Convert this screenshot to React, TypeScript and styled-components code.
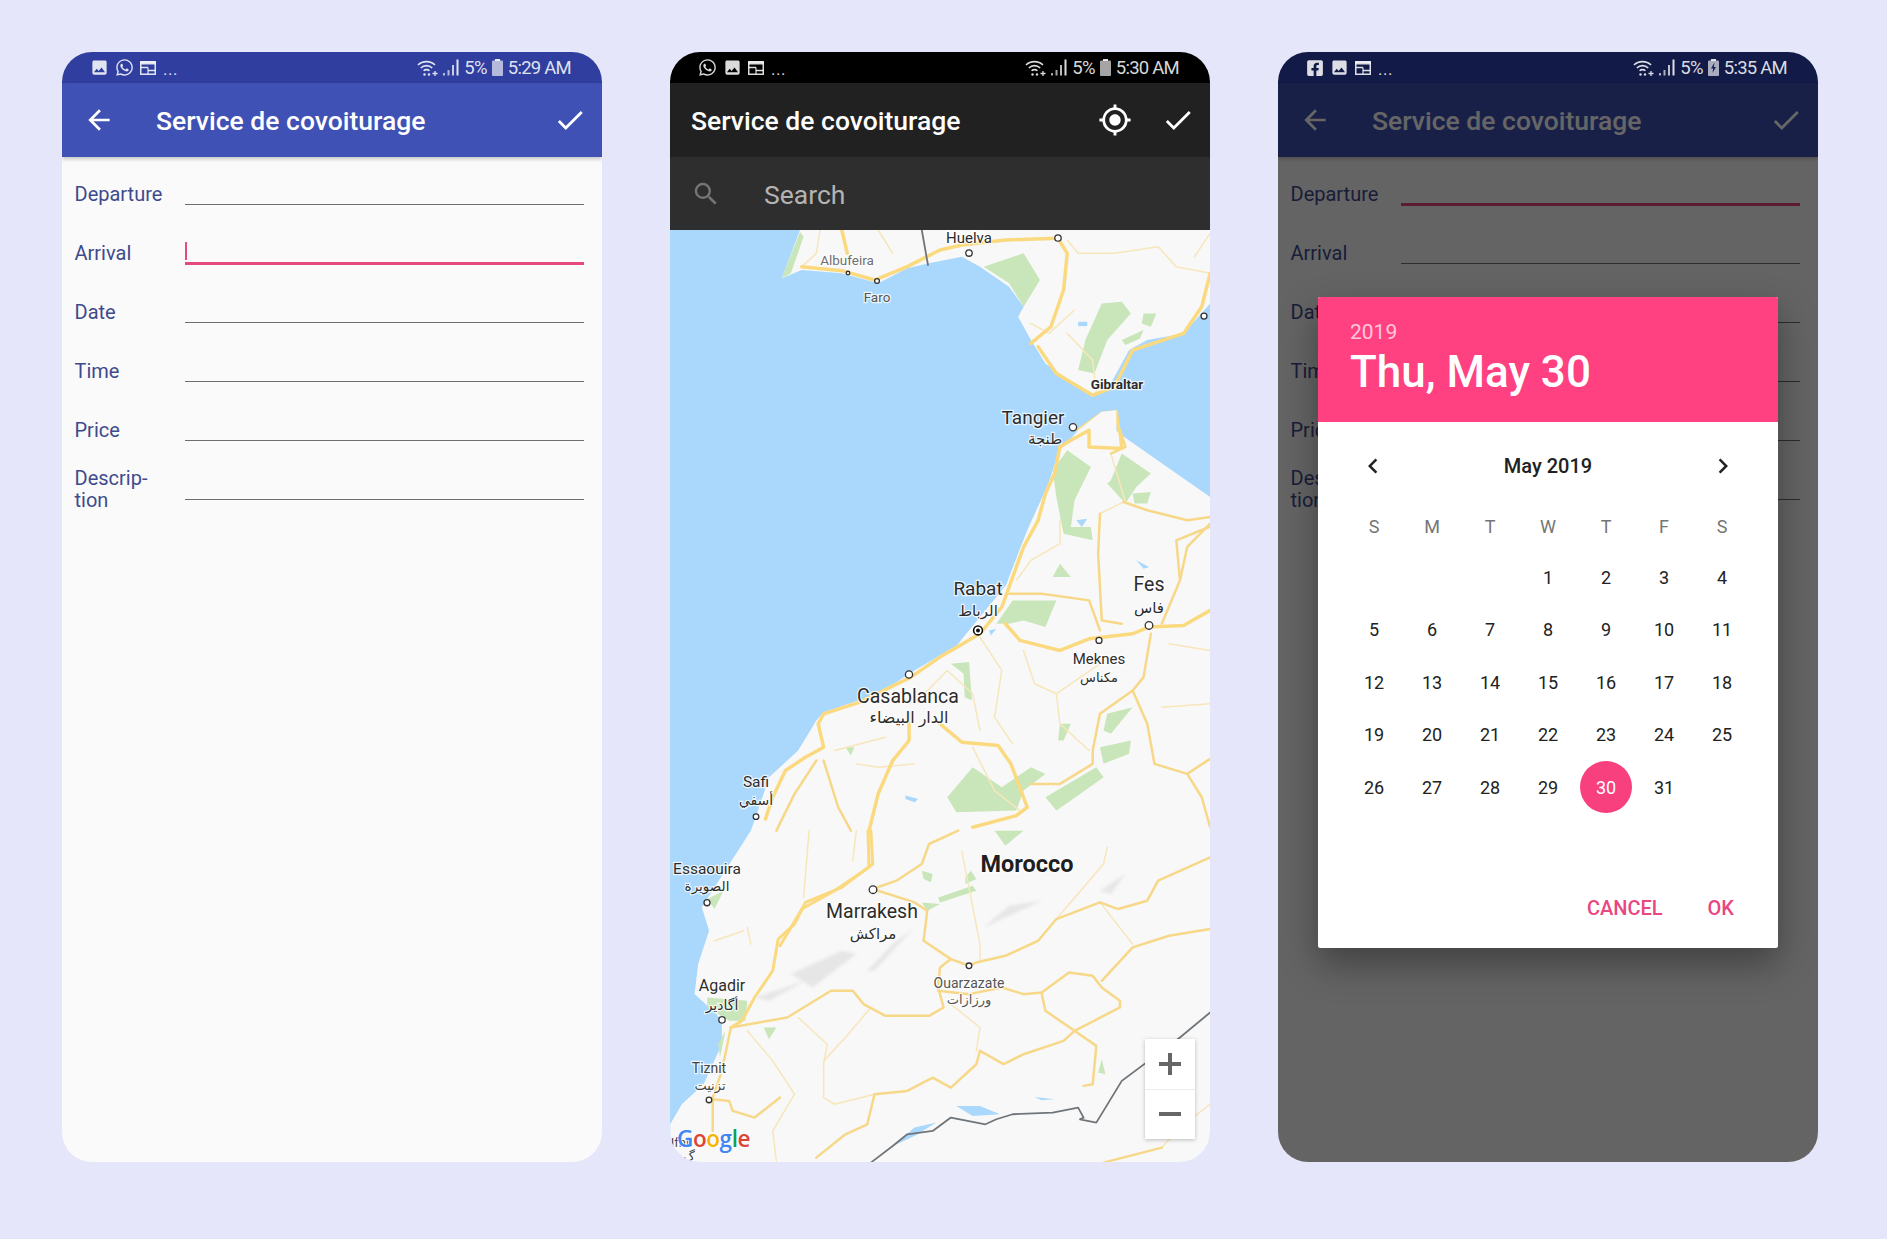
import styled, { createGlobalStyle } from "styled-components";
import { FaFacebookSquare, FaWhatsapp } from "react-icons/fa";
import {
  MdArrowBack,
  MdCheck,
  MdChevronLeft,
  MdChevronRight,
  MdGpsFixed,
  MdImage,
  MdSearch,
} from "react-icons/md";

const GlobalStyle = createGlobalStyle`
  html, body {
    margin: 0;
    background: #e5e6f9;
    font-family: Roboto, "DejaVu Sans", sans-serif;
  }
`;

const Page = styled.main`
  display: flex;
  gap: 68px;
  width: 1887px;
  height: 1239px;
  padding: 52px 0 0 62px;
  box-sizing: border-box;
  overflow: hidden;
`;

const Phone = styled.section`
  position: relative;
  display: flex;
  flex-direction: column;
  width: 540px;
  height: 1110px;
  border-radius: 30px;
  overflow: hidden;
  background: #fafafa;
`;

const StatusRow = styled.div<{ $bg: string }>`
  display: flex;
  align-items: center;
  justify-content: space-between;
  flex: none;
  height: 31px;
  padding: 0 31px 0 28px;
  background: ${(p) => p.$bg};
  color: rgba(255, 255, 255, 0.86);
  font-size: 18.5px;
  letter-spacing: -0.75px;
`;

const StatusGroup = styled.div<{ $gap: number }>`
  display: flex;
  align-items: center;
  gap: ${(p) => p.$gap}px;
`;

const Dots = styled.span`
  font-size: 17px;
  line-height: 1;
  letter-spacing: 0.5px;
  margin-left: 1px;
  transform: translateY(2px);
`;

const Toolbar = styled.header<{ $bg: string; $shadow?: boolean }>`
  position: relative;
  z-index: 1;
  display: flex;
  align-items: center;
  flex: none;
  height: 74px;
  padding: 0 14px 0 19px;
  background: ${(p) => p.$bg};
  color: #fff;
  box-shadow: ${(p) => (p.$shadow ? "0 2px 4px rgba(0, 0, 0, 0.22)" : "none")};
`;

const ToolbarTitle = styled.h1<{ $inset: number }>`
  flex: 1;
  margin: 2px 0 0 ${(p) => p.$inset}px;
  font-size: 26.5px;
  font-weight: 500;
  line-height: 36px;
`;

const ToolbarIcon = styled.span<{ $gap?: number }>`
  display: flex;
  width: 36px;
  height: 36px;
  align-items: center;
  justify-content: center;
  margin-right: ${(p) => p.$gap ?? 0}px;
`;

const Form = styled.div`
  display: flex;
  flex-direction: column;
  gap: 37px;
  padding: 26px 18px 0 12.5px;
`;

const FormRow = styled.div`
  display: flex;
  align-items: center;
  height: 22px;
`;

const FieldLabel = styled.label`
  flex: none;
  width: 110.5px;
  color: #3f4a8c;
  font-size: 20px;
  line-height: 22px;
`;

const Field = styled.div<{ $active?: boolean }>`
  position: relative;
  top: ${(p) => (p.$active ? "1px" : "0")};
  flex: 1;
  height: 22px;
  box-sizing: border-box;
  border-bottom: ${(p) => (p.$active ? "3px solid #e5497f" : "1.5px solid #6e6e6e")};
`;

const Caret = styled.span`
  position: absolute;
  left: 0;
  top: -1px;
  width: 2px;
  height: 18px;
  background: #e5497f;
`;

const SearchBar = styled.div`
  display: flex;
  align-items: center;
  flex: none;
  height: 73px;
  padding-left: 21px;
  background: #2e2e2e;
  color: #757575;
`;

const SearchText = styled.span`
  margin: 2px 0 0 43px;
  color: #b4b4b4;
  font-size: 26.5px;
`;

const MapArea = styled.div`
  position: relative;
  flex: 1;
  min-height: 0;
  background: #a9d8fc;
`;

const MapSvg = styled.svg`
  display: block;
  width: 100%;
  height: 100%;
`;

const SoftShapes = styled.g<{ $blur: number }>`
  filter: blur(${(p) => p.$blur}px);
`;

const MapLabel = styled.text<{ $size: number; $weight?: number; $color?: string }>`
  font-family: Roboto, "DejaVu Sans", sans-serif;
  font-size: ${(p) => p.$size}px;
  font-weight: ${(p) => p.$weight ?? 400};
  fill: ${(p) => p.$color ?? "#2c2c2c"};
  text-anchor: middle;
  stroke: rgba(255, 255, 255, 0.75);
  stroke-width: 2.5px;
  paint-order: stroke;
`;

const GoogleMark = styled.text`
  font-family: "Open Sans", Roboto, sans-serif;
  font-size: 22.5px;
  font-weight: 600;
  stroke: rgba(255, 255, 255, 0.7);
  stroke-width: 2px;
  paint-order: stroke;
  letter-spacing: -0.4px;
`;

const ZoomControl = styled.div`
  position: absolute;
  right: 15px;
  bottom: 23px;
  display: flex;
  flex-direction: column;
  width: 50px;
  height: 100px;
  background: #fff;
  box-shadow: 0 1px 4px rgba(0, 0, 0, 0.25);
`;

const ZoomButton = styled.div`
  display: flex;
  flex: 1;
  align-items: center;
  justify-content: center;
  & + & {
    border-top: 1px solid #ececec;
  }
`;

const Scrim = styled.div`
  position: absolute;
  inset: 31px 0 0;
  z-index: 2;
  display: flex;
  align-items: center;
  justify-content: center;
  background: rgba(0, 0, 0, 0.6);
`;

const Dialog = styled.div`
  display: flex;
  flex-direction: column;
  width: 460px;
  height: 651px;
  border-radius: 2px;
  overflow: hidden;
  background: #fff;
  box-shadow: 0 16px 36px rgba(0, 0, 0, 0.35);
`;

const DialogHead = styled.div`
  flex: none;
  height: 125px;
  padding: 23px 0 0 32px;
  box-sizing: border-box;
  background: #ff4081;
  color: #fff;
`;

const HeadYear = styled.div`
  font-size: 21px;
  line-height: 24px;
  color: rgba(255, 255, 255, 0.72);
`;

const HeadDate = styled.div`
  font-size: 44px;
  font-weight: 500;
  line-height: 50px;
  margin-top: 3px;
`;

const MonthNav = styled.div`
  display: flex;
  align-items: center;
  justify-content: space-between;
  height: 60px;
  margin-top: 14px;
  padding: 0 40px;
  color: #212121;
`;

const MonthName = styled.span`
  font-size: 20px;
  font-weight: 500;
`;

const WeekRow = styled.div`
  display: grid;
  grid-template-columns: repeat(7, 58px);
  height: 52px;
  margin: 4px 27px 0;
`;

const WeekDay = styled.div`
  display: flex;
  align-items: center;
  justify-content: center;
  color: #757575;
  font-size: 18px;
`;

const DayGrid = styled.div`
  display: grid;
  grid-template-columns: repeat(7, 58px);
  grid-auto-rows: 52.5px;
  margin: -1px 27px 0;
`;

const Day = styled.div<{ $selected?: boolean }>`
  display: flex;
  align-items: center;
  justify-content: center;
  justify-self: center;
  width: 52px;
  height: 52px;
  border-radius: 50%;
  background: ${(p) => (p.$selected ? "#f8407e" : "transparent")};
  color: ${(p) => (p.$selected ? "#fff" : "#212121")};
  font-size: 18px;
`;

const DialogActions = styled.div`
  display: flex;
  justify-content: flex-end;
  gap: 45px;
  margin-top: auto;
  padding: 0 44px 28px 0;
`;

const ActionButton = styled.span`
  color: #e94682;
  font-size: 20px;
  font-weight: 500;
  line-height: 24px;
`;

const CalendarGlyph = () => (
  <svg width="16" height="14" viewBox="0 0 16 14" fill="none" stroke="currentColor">
    <rect x="0.75" y="0.75" width="14.5" height="12.5" strokeWidth="1.5" />
    <rect x="0.5" y="0.5" width="15" height="3" fill="currentColor" stroke="none" />
    <path d="M1 6.5h7M8 9.5h7M1 6.5" strokeWidth="1.5" />
    <path d="M8 6.5v6.5" strokeWidth="1.2" />
  </svg>
);

const WifiGlyph = () => (
  <svg width="21" height="18" viewBox="0 0 21 18" fill="none" stroke="currentColor" strokeWidth="1.6">
    <path d="M1 6C5.5 1.5 13.5 1.5 18 6" />
    <path d="M3.8 9C7 5.8 12 5.8 15.2 9" />
    <path d="M6.6 11.8C8.2 10.2 10.8 10.2 12.4 11.8" />
    <circle cx="7.5" cy="15.5" r="1.2" fill="currentColor" stroke="none" />
    <circle cx="12" cy="15.5" r="1.2" fill="currentColor" stroke="none" />
    <path d="M18 12v5M15.5 14.5h5" strokeWidth="1.3" />
  </svg>
);

const SignalGlyph = () => (
  <svg width="16" height="17" viewBox="0 0 16 17" fill="currentColor">
    <rect x="0" y="14" width="2" height="2.5" opacity="0.75" />
    <rect x="4.5" y="11" width="2" height="5.5" opacity="0.75" />
    <rect x="9" y="6" width="2" height="10.5" opacity="0.85" />
    <rect x="13.5" y="0.5" width="2" height="16" />
  </svg>
);

const BatteryGlyph = ({ charging }: { charging?: boolean }) => (
  <svg width="11" height="17" viewBox="0 0 11 17" fill="currentColor">
    <rect x="3" y="0" width="5" height="2" />
    <rect x="0" y="1.5" width="11" height="15.5" opacity="0.75" rx="1" />
    {charging && <path d="M6.5 3.5L3 9.5h2.2L4.4 14 8 8H5.8z" fill="#1a2255" />}
  </svg>
);

type StatusProps = {
  bg: string;
  time: string;
  icons: React.ReactNode;
  charging?: boolean;
};

const StatusBar = ({ bg, time, icons, charging }: StatusProps) => (
  <StatusRow $bg={bg}>
    <StatusGroup $gap={6}>
      {icons}
      <Dots>...</Dots>
    </StatusGroup>
    <StatusGroup $gap={5}>
      <WifiGlyph />
      <SignalGlyph />
      <span>5%</span>
      <BatteryGlyph charging={charging} />
      <span>{time}</span>
    </StatusGroup>
  </StatusRow>
);

const FIELDS = ["Departure", "Arrival", "Date", "Time", "Price", "Descrip-\ntion"];

const FormFields = ({ active, caret }: { active: number; caret?: boolean }) => (
  <Form>
    {FIELDS.map((name, i) => (
      <FormRow key={name}>
        <FieldLabel>
          {name.split("\n").map((part) => (
            <div key={part}>{part}</div>
          ))}
        </FieldLabel>
        <Field $active={i === active}>{caret && i === active && <Caret />}</Field>
      </FormRow>
    ))}
  </Form>
);

// map shapes are traced per crop, each group has its own origin
const CROP_TOP = "translate(660 40) scale(0.3636 0.3333)";
const CROP_MID = "translate(660 430) scale(0.3636 0.3333)";
const CROP_LOW = "translate(660 830) scale(0.3636 0.3333)";

const LAND = "#f8f8f8";
const GREEN = "#c8e6b9";
const WATER = "#a9d8fc";
const ROAD = "#fbd97f";
const ROAD_B = "#f7d888";
const MINOR = "#f8e6bb";

const Line = ({ d, color, w }: { d: string; color: string; w: number }) => (
  <path d={d} fill="none" stroke={color} strokeWidth={w} strokeLinejoin="round" strokeLinecap="round" vectorEffect="non-scaling-stroke" />
);

const TOP_GREENS = [
  "M335 715L385 575 395 590 360 700z",
  "M890 680L1000 640 1045 720 1000 800 960 730z",
  "M1215 790L1270 785 1295 820 1230 900 1195 1000 1150 990 1170 900z",
  "M1330 820L1365 820 1350 860 1325 850z",
  "M1270 900L1330 870 1320 895 1280 915z",
];
const TOP_MINOR = [
  "M1120 600L1150 640 1250 640 1370 620 1420 680 1513 700",
  "M440 570L430 640 390 680M600 570L640 640M1513 580L1470 650",
  "M1020 850L1070 880 1140 810",
  "M1120 880L1190 960 1200 1060",
];
const TOP_ROADS = [
  "M390 680L500 692 590 720 680 680 770 630 830 615 950 600 1095 595",
  "M1095 595L1120 640 1110 750 1075 860 1020 910",
  "M500 570L515 640",
  "M1513 700L1490 800 1440 880 1300 930 1250 1040 1190 1065 1090 1000 1040 920",
  "M1150 1170L1215 1120 1255 1115 1265 1200",
];

const MID_GREENS = [
  "M1080 120L1120 60 1185 110 1140 210 1130 290 1185 290 1190 330 1110 310 1090 200z",
  "M1240 150L1270 70 1350 130 1310 170 1280 220 1230 160z",
  "M1100 400L1130 440 1080 440z",
  "M925 580L970 510 1090 510 1060 590 1000 570 960 580z",
  "M800 700L850 695 858 810 838 800 835 730z",
  "M790 1100L860 1010 940 1070 1020 1010 1060 1030 1000 1080 980 1140 815 1145z",
  "M1060 1100L1200 1010 1220 1040 1130 1110 1090 1140z",
  "M1230 850L1300 830 1240 910 1220 900z",
  "M1210 950L1295 930 1290 970 1220 1000z",
  "M1100 880L1130 880 1110 930 1095 930z",
  "M510 950L535 950 525 975z",
  "M1300 190L1350 185 1340 220 1305 220z",
];
const MID_WATER = [
  "M1310 390L1345 410 1330 415z",
  "M675 1095L710 1105 700 1115 675 1105z",
  "M1145 270L1175 265 1160 290z",
  "M905 600L925 595 910 615z",
];
const MID_MINOR = [
  "M1240 70L1280 215",
  "M1100 270L1100 340 1020 390 980 450",
  "M860 950L920 1080 990 1140",
  "M880 620L940 720 920 860 970 940",
  "M1090 790L1100 880 1180 960",
  "M700 820L790 720 860 790 880 900",
  "M480 960L620 920",
  "M1210 250L1275 215",
  "M1000 660L1030 760 1090 790 1210 700",
  "M1400 640L1513 660M1380 830L1513 820",
  "M540 1000L600 1010 700 1000",
];
const MID_ROADS = [
  "M1100 50L1085 130 1060 190 1040 270 1000 350 960 470 940 530 880 610 770 680 690 740 550 815 450 850 435 880 450 950 400 980 345 1020 310 1100 290 1165",
  "M685 850L685 930 640 990 600 1090 575 1200",
  "M950 580L990 630 1100 660 1180 625 1300 610 1345 590 1440 585 1513 540",
  "M770 880L830 935 930 945 965 1000 1010 1130",
  "M1010 1130L980 1155 860 1190",
  "M1100 50L1130 30 1180 0M1180 0L1180 50 1270 55 1265 0",
];
const MID_ROADS_B = [
  "M1275 215L1340 240 1450 270 1513 260",
  "M1350 610L1330 740 1300 780 1210 850 1190 960 1190 1000 1100 1060 1020 1060",
  "M1300 780L1340 880 1360 1000 1450 1030 1513 985",
  "M1450 1030L1490 1100 1513 1190",
  "M1240 70L1280 50 1265 0",
  "M960 490L1050 490 1180 510 1210 600",
  "M1210 250L1205 370 1215 570 1270 580",
  "M1430 450L1420 330 1510 290",
  "M1513 280L1450 350 1430 450 1380 580",
  "M450 990L490 1130 525 1200",
  "M430 990L370 1090 320 1200",
];

const LOW_GREENS = [
  "M720 120L750 130 745 155 725 145z",
  "M765 200L860 165 870 180 770 215z",
  "M840 140L855 120 870 145 840 160z",
  "M720 215L770 220 735 240z",
  "M920 0L1000 0 950 45z",
  "M285 590L320 590 300 625z",
  "M1205 725L1215 685 1225 730z",
  "M130 500L240 510 235 570 190 570 130 530z",
  "M160 640L180 600 165 680z",
  "M130 205L175 180 150 235z",
];
const LOW_RELIEF = [
  "M360 430L500 360 540 370 420 470z",
  "M570 420L640 340 700 290 640 360 590 420z",
  "M890 290L960 225 1050 210 950 260z",
  "M260 500L400 450 300 510z",
  "M1210 180L1280 130 1240 190z",
];
const LOW_WATER = [
  "M815 825L880 825 935 850 860 855z",
  "M1030 798L1085 805 1050 808z",
  "M640 945L700 890 760 875 700 915z",
];
const LOW_MINOR = [
  "M1210 215L1300 340",
  "M240 290L250 340M150 330L230 300",
  "M410 0L395 200M540 0L530 90",
  "M830 60L880 340 880 395",
  "M1230 50L1220 100 1090 265",
  "M880 590L800 520M880 590L870 660",
  "M450 700L450 800 480 820 590 790",
  "M380 560L460 640 450 700",
  "M580 530L510 620 450 690",
  "M240 600L310 690 370 790 310 900 320 990",
  "M1513 820L1430 890 1380 950",
];
const LOW_ROADS = [
  "M580 0L585 100 500 170 400 215 370 280 325 325 310 420 260 500 225 570 195 590",
  "M572 0L575 110 480 180 390 235 355 300 330 345",
];
const LOW_ROADS_B = [
  "M585 175L700 215 735 240 725 330 800 385 850 405 870 395 950 375 1040 330 1090 265 1210 215 1260 235 1340 210 1370 150 1513 80",
  "M585 175L650 150 720 100 740 40 820 0",
  "M195 590L350 560 470 480 530 480 560 520 620 555 740 555 780 530 765 470 770 410 800 385",
  "M195 590L170 720 145 800 145 900",
  "M145 805L190 810 200 840 260 860 330 800",
  "M765 480L850 490 940 470 1000 490 1050 485 1125 425 1190 435 1215 470 1265 510 1265 530 1140 600 1200 645 1190 760 1165 765",
  "M1050 490L1060 540 1140 600 1110 630 1000 670 945 700 880 660 870 700 800 770 750 740 680 780 590 790 570 880 510 910 430 980",
  "M1215 450L1300 350 1400 315 1513 295",
  "M1380 950L1220 995",
];

type Place = { x: number; y: number; text: string; size: number; weight?: number; color?: string };

const PLACES: Place[] = [
  { x: 969, y: 243, text: "Huelva", size: 15 },
  { x: 847, y: 265, text: "Albufeira", size: 13.5, color: "#6f6f6f" },
  { x: 877, y: 302, text: "Faro", size: 13.5, color: "#555" },
  { x: 1117, y: 389, text: "Gibraltar", size: 13.5, weight: 700 },
  { x: 1033, y: 424, text: "Tangier", size: 19 },
  { x: 1045, y: 444, text: "طنجة", size: 15 },
  { x: 978, y: 595, text: "Rabat", size: 19 },
  { x: 978, y: 616, text: "الرباط", size: 15 },
  { x: 1149, y: 591, text: "Fes", size: 19.5 },
  { x: 1149, y: 613, text: "فاس", size: 15 },
  { x: 1099, y: 664, text: "Meknes", size: 15 },
  { x: 1099, y: 682, text: "مكناس", size: 13 },
  { x: 908, y: 702, text: "Casablanca", size: 19.5 },
  { x: 909, y: 722, text: "الدار البيضاء", size: 16 },
  { x: 756, y: 786, text: "Safi", size: 15.5 },
  { x: 756, y: 804, text: "أسفي", size: 14 },
  { x: 707, y: 873, text: "Essaouira", size: 15.5 },
  { x: 707, y: 890, text: "الصويرة", size: 13.5 },
  { x: 872, y: 917, text: "Marrakesh", size: 19.5 },
  { x: 873, y: 938, text: "مراكش", size: 15 },
  { x: 1027, y: 871, text: "Morocco", size: 23.5, weight: 700, color: "#1f1f1f" },
  { x: 969, y: 987, text: "Ouarzazate", size: 14, color: "#555" },
  { x: 969, y: 1003, text: "ورزازات", size: 13, color: "#555" },
  { x: 722, y: 990, text: "Agadir", size: 16 },
  { x: 722, y: 1009, text: "أگادير", size: 14 },
  { x: 709, y: 1072, text: "Tiznit", size: 14, color: "#444" },
  { x: 710, y: 1089, text: "تزنيت", size: 13, color: "#444" },
  { x: 680, y: 1146, text: "Ifni", size: 13, color: "#444" },
  { x: 689, y: 1160, text: "گ", size: 13, color: "#444" },
];

const CITIES = [
  [1058, 238, 3.2],
  [969, 253, 3.2],
  [877, 281, 2.4],
  [848, 273, 1.8],
  [1204, 316, 3],
  [1073, 427, 3.6],
  [1149, 625, 3.8],
  [1099, 640, 3],
  [909, 674, 3.6],
  [756, 816, 2.8],
  [873, 889, 3.8],
  [707, 902, 3],
  [722, 1019, 3.2],
  [709, 1099, 2.8],
  [969, 965, 2.8],
];

const MapView = () => (
  <MapArea>
    <MapSvg viewBox="670 230 540 931" preserveAspectRatio="none">
      <SoftShapes $blur={0.5}>
        <g transform={CROP_TOP}>
          <path fill={LAND} d="M385 570L335 715 390 690 500 700 600 730 680 685 740 670 830 650 880 680 960 740 1000 800 985 830 1020 900 1060 970 1190 1070 1230 1050 1290 930 1340 900 1440 880 1513 790V570z" />
          {TOP_GREENS.map((d) => <path key={d} d={d} fill={GREEN} />)}
          <path d="M1150 845L1175 845 1175 858 1150 858z" fill={WATER} />
          {TOP_MINOR.map((d) => <Line key={d} d={d} color={MINOR} w={1.5} />)}
          {TOP_ROADS.map((d) => <Line key={d} d={d} color={ROAD} w={3.5} />)}
          <Line d="M720 570L737 675" color="#70757a" w={1.8} />
        </g>
        <g transform={CROP_MID}>
          <path fill={LAND} d="M1513 -590L1513 215 1430 180 1350 120 1280 50 1255 0 1255 -60 1215 -55 1150 0 1110 50 1060 180 1010 300 960 440 930 530 870 610 700 720 600 790 450 845 430 870 380 960 300 1040 260 1170 250 1200 215 1260 150 1370 115 1430 135 1500 105 1600 95 1690 155 1750 170 1770 170 1840 120 1960 60 2020 28 2080V2200H1513V215z" />
          <path fill={LAND} d="M1513 200V1200H700V800L1000 400 1100 50 1250 0z" />
          {MID_GREENS.map((d) => <path key={d} d={d} fill={GREEN} />)}
          {MID_WATER.map((d) => <path key={d} d={d} fill={WATER} />)}
          {MID_MINOR.map((d) => <Line key={d} d={d} color={MINOR} w={1.5} />)}
          {MID_ROADS_B.map((d) => <Line key={d} d={d} color={ROAD_B} w={2.5} />)}
          {MID_ROADS.map((d) => <Line key={d} d={d} color={ROAD} w={3.5} />)}
        </g>
        <g transform={CROP_LOW}>
          {LOW_GREENS.map((d) => <path key={d} d={d} fill={GREEN} />)}
          {LOW_WATER.map((d) => <path key={d} d={d} fill={WATER} />)}
          {LOW_MINOR.map((d) => <Line key={d} d={d} color={MINOR} w={1.5} />)}
          {LOW_ROADS_B.map((d) => <Line key={d} d={d} color={ROAD_B} w={2.5} />)}
          {LOW_ROADS.map((d) => <Line key={d} d={d} color={ROAD} w={3} />)}
          <Line d="M580 995L640 945 680 910 750 900 800 860 895 880 925 865 970 850 1080 845 1150 830 1165 860 1155 865 1200 875 1270 750 1430 620 1513 545" color="#70757a" w={1.8} />
        </g>
      </SoftShapes>
      <SoftShapes $blur={1.8}>
        <g transform={CROP_LOW}>
          {LOW_RELIEF.map((d) => <path key={d} d={d} fill="#e6e6e6" />)}
        </g>
      </SoftShapes>
      {CITIES.map(([x, y, r]) => (
        <circle key={`${x}-${y}`} cx={x} cy={y} r={r} fill="#fff" stroke="#333" strokeWidth={1.3} />
      ))}
      <circle cx={978} cy={630} r={4.4} fill="#fff" stroke="#111" strokeWidth={1.6} />
      <circle cx={978} cy={630} r={2} fill="#111" />
      {PLACES.map((p) => (
        <MapLabel key={p.text} x={p.x} y={p.y} $size={p.size} $weight={p.weight} $color={p.color}>
          {p.text}
        </MapLabel>
      ))}
      <GoogleMark x={677} y={1146}>
        <tspan fill="#4285f4">G</tspan>
        <tspan fill="#db4437">o</tspan>
        <tspan fill="#f4b400">o</tspan>
        <tspan fill="#4285f4">g</tspan>
        <tspan fill="#0f9d58">l</tspan>
        <tspan fill="#db4437">e</tspan>
      </GoogleMark>
    </MapSvg>
    <ZoomControl>
      <ZoomButton>
        <svg width="24" height="24" viewBox="0 0 24 24" fill="#666">
          <path d="M10 1h4v9h9v4h-9v9h-4v-9H1v-4h9z" />
        </svg>
      </ZoomButton>
      <ZoomButton>
        <svg width="24" height="24" viewBox="0 0 24 24" fill="#666">
          <path d="M1 10h22v4H1z" />
        </svg>
      </ZoomButton>
    </ZoomControl>
  </MapArea>
);

const WEEK = ["S", "M", "T", "W", "T", "F", "S"];
const DAYS = [0, 0, 0, ...Array.from({ length: 31 }, (_, i) => i + 1)];

const DatePicker = () => (
  <Dialog>
    <DialogHead>
      <HeadYear>2019</HeadYear>
      <HeadDate>Thu, May 30</HeadDate>
    </DialogHead>
    <MonthNav>
      <MdChevronLeft size={30} />
      <MonthName>May 2019</MonthName>
      <MdChevronRight size={30} />
    </MonthNav>
    <WeekRow>
      {WEEK.map((d, i) => (
        <WeekDay key={i}>{d}</WeekDay>
      ))}
    </WeekRow>
    <DayGrid>
      {DAYS.map((d, i) => (
        <Day key={i} $selected={d === 30}>
          {d > 0 ? d : ""}
        </Day>
      ))}
    </DayGrid>
    <DialogActions>
      <ActionButton>CANCEL</ActionButton>
      <ActionButton>OK</ActionButton>
    </DialogActions>
  </Dialog>
);

export default function App() {
  return (
    <Page>
      <GlobalStyle />
      <Phone>
        <StatusBar
          bg="#303f9f"
          time="5:29 AM"
          icons={
            <>
              <MdImage size={19} />
              <FaWhatsapp size={19} />
              <CalendarGlyph />
            </>
          }
        />
        <Toolbar $bg="#3f51b5" $shadow>
          <ToolbarIcon>
            <MdArrowBack size={32} />
          </ToolbarIcon>
          <ToolbarTitle $inset={39}>Service de covoiturage</ToolbarTitle>
          <ToolbarIcon>
            <MdCheck size={34} />
          </ToolbarIcon>
        </Toolbar>
        <FormFields active={1} caret />
      </Phone>

      <Phone>
        <StatusBar
          bg="#000"
          time="5:30 AM"
          icons={
            <>
              <FaWhatsapp size={19} />
              <MdImage size={19} />
              <CalendarGlyph />
            </>
          }
        />
        <Toolbar $bg="#212121">
          <ToolbarTitle $inset={2}>Service de covoiturage</ToolbarTitle>
          <ToolbarIcon $gap={27}>
            <MdGpsFixed size={34} />
          </ToolbarIcon>
          <ToolbarIcon>
            <MdCheck size={34} />
          </ToolbarIcon>
        </Toolbar>
        <SearchBar>
          <MdSearch size={30} />
          <SearchText>Search</SearchText>
        </SearchBar>
        <MapView />
      </Phone>

      <Phone>
        <StatusBar
          bg="#121a47"
          time="5:35 AM"
          charging
          icons={
            <>
              <FaFacebookSquare size={18} />
              <MdImage size={19} />
              <CalendarGlyph />
            </>
          }
        />
        <Toolbar $bg="#3f51b5" $shadow>
          <ToolbarIcon>
            <MdArrowBack size={32} />
          </ToolbarIcon>
          <ToolbarTitle $inset={39}>Service de covoiturage</ToolbarTitle>
          <ToolbarIcon>
            <MdCheck size={34} />
          </ToolbarIcon>
        </Toolbar>
        <FormFields active={0} />
        <Scrim>
          <DatePicker />
        </Scrim>
      </Phone>
    </Page>
  );
}
